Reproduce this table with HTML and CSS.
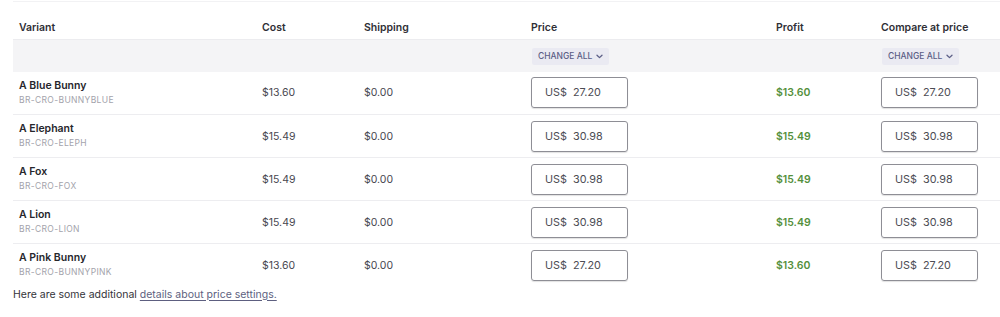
FILE: index.html
```html
<!DOCTYPE html>
<html>
<head>
<meta charset="utf-8">
<link rel="stylesheet" href="styles.css">
</head>
<body>
<div class="wrap">
  <table class="vt">
    <colgroup>
      <col class="c-var"><col class="c-cost"><col class="c-ship"><col class="c-price"><col class="c-profit"><col class="c-cmp">
    </colgroup>
    <thead>
      <tr class="head">
        <th>Variant</th><th>Cost</th><th>Shipping</th><th>Price</th><th>Profit</th><th>Compare at price</th>
      </tr>
      <tr class="bulk">
        <td></td><td></td><td></td>
        <td><button class="chg">CHANGE ALL <svg width="7" height="5" viewBox="0 0 7 5"><path d="M1 1.2 L3.5 3.6 L6 1.2" fill="none" stroke="currentColor" stroke-width="1.3" stroke-linecap="round" stroke-linejoin="round"/></svg></button></td>
        <td></td>
        <td><button class="chg">CHANGE ALL <svg width="7" height="5" viewBox="0 0 7 5"><path d="M1 1.2 L3.5 3.6 L6 1.2" fill="none" stroke="currentColor" stroke-width="1.3" stroke-linecap="round" stroke-linejoin="round"/></svg></button></td>
      </tr>
    </thead>
    <tbody>
      <tr>
        <td><div class="name">A Blue Bunny</div><div class="sku">BR-CRO-BUNNYBLUE</div></td>
        <td>$13.60</td><td>$0.00</td>
        <td><div class="inp">US$&nbsp; 27.20</div></td>
        <td class="profit">$13.60</td>
        <td><div class="inp">US$&nbsp; 27.20</div></td>
      </tr>
      <tr>
        <td><div class="name">A Elephant</div><div class="sku">BR-CRO-ELEPH</div></td>
        <td>$15.49</td><td>$0.00</td>
        <td><div class="inp">US$&nbsp; 30.98</div></td>
        <td class="profit">$15.49</td>
        <td><div class="inp">US$&nbsp; 30.98</div></td>
      </tr>
      <tr>
        <td><div class="name">A Fox</div><div class="sku">BR-CRO-FOX</div></td>
        <td>$15.49</td><td>$0.00</td>
        <td><div class="inp">US$&nbsp; 30.98</div></td>
        <td class="profit">$15.49</td>
        <td><div class="inp">US$&nbsp; 30.98</div></td>
      </tr>
      <tr>
        <td><div class="name">A Lion</div><div class="sku">BR-CRO-LION</div></td>
        <td>$15.49</td><td>$0.00</td>
        <td><div class="inp">US$&nbsp; 30.98</div></td>
        <td class="profit">$15.49</td>
        <td><div class="inp">US$&nbsp; 30.98</div></td>
      </tr>
      <tr class="last">
        <td><div class="name">A Pink Bunny</div><div class="sku">BR-CRO-BUNNYPINK</div></td>
        <td>$13.60</td><td>$0.00</td>
        <td><div class="inp">US$&nbsp; 27.20</div></td>
        <td class="profit">$13.60</td>
        <td><div class="inp">US$&nbsp; 27.20</div></td>
      </tr>
    </tbody>
  </table>
  <p class="note">Here are some additional <a href="#">details about price settings.</a></p>
</div>
</body>
</html>
```

FILE: styles.css
```css
* { box-sizing: border-box; }
html, body { margin: 0; padding: 0; background: #fff; }
body {
  font-family: Inter, "Noto Sans", sans-serif;
  color: #2b2b30;
  overflow: hidden;
}
.wrap { padding: 1px 0 0 13px; }
.vt {
  width: 987px;
  table-layout: fixed;
  border-collapse: collapse;
  border-top: 1px solid #f2f2f4;
}
.c-var { width: 243px; }
.c-cost { width: 102px; }
.c-ship { width: 167px; }
.c-price { width: 245px; }
.c-profit { width: 105px; }
.c-cmp { width: 125px; }

.vt th, .vt td {
  padding: 0 0 0 6px;
  text-align: left;
  font-size: 10.5px;
}
.head th {
  height: 38px;
  vertical-align: bottom;
  padding-bottom: 5px;
  font-weight: 600;
  color: #2f2f36;
}
.bulk td {
  height: 32px;
  background: #f4f4f6;
  border-top: 1px solid #ececef;
  vertical-align: middle;
  padding-top: 1px;
}
.chg {
  display: inline-flex;
  align-items: center;
  gap: 4px;
  height: 17px;
  padding: 0 6px;
  margin-left: 1px;
  border: 0;
  border-radius: 2px;
  background: #eaeaf2;
  color: #5b5e86;
  font-family: Inter, "Noto Sans", sans-serif;
  font-size: 8.5px;
  font-weight: 500;
}
.vt tbody td {
  height: 43px;
  border-bottom: 1px solid #ededf0;
  vertical-align: middle;
  color: #47474f;
}
.vt tbody tr.last td { border-bottom: 0; }
.name {
  font-weight: 600;
  color: #26262c;
  font-size: 10.5px;
  line-height: 14px;
}
.sku {
  font-size: 8.5px;
  color: #a3a3ab;
  line-height: 13px;
  margin-top: 1px;
  letter-spacing: 0.35px;
}
.profit {
  color: #55903c !important;
  font-weight: 600;
}
.inp {
  width: 97px;
  height: 31px;
  border: 1px solid #8e8e95;
  border-radius: 3px;
  box-shadow: 0 1px 1px rgba(0,0,0,0.12);
  display: flex;
  align-items: center;
  padding-left: 13px;
  font-size: 10.8px;
  color: #4c4c54;
}
.note {
  margin: 1px 0 0 0;
  font-size: 10.5px;
  color: #34343a;
}
.note a {
  color: #5d5f80;
  text-decoration: underline;
  text-underline-offset: 2px;
}
```
